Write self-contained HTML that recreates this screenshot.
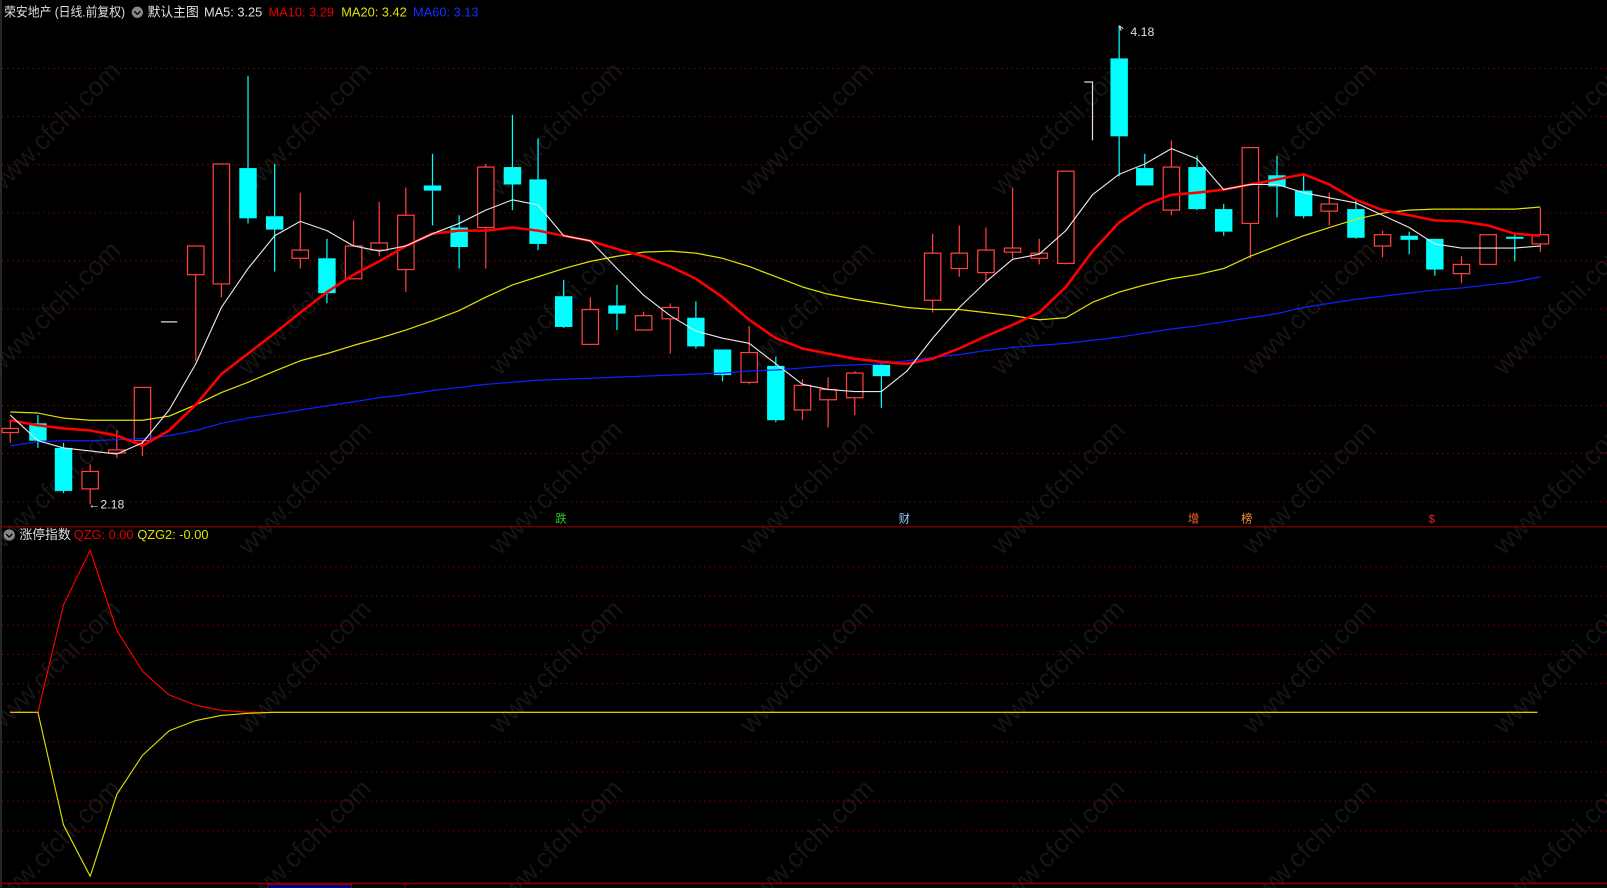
<!DOCTYPE html>
<html><head><meta charset="utf-8"><style>
html,body{margin:0;padding:0;background:#000;overflow:hidden}
svg{display:block}
text{font-family:"Liberation Sans","Noto Sans CJK SC",sans-serif}
</style></head><body>
<svg id="s" width="1607" height="888" viewBox="0 0 1568 866.4" preserveAspectRatio="none" xmlns="http://www.w3.org/2000/svg">
<rect width="1568" height="867" fill="#000"/>
<g id="wm" fill="#151515" font-size="26"></g>
<g id="grid" stroke="#7a0000" stroke-width="1" stroke-dasharray="1.5,3.5"></g>
<line x1="1" y1="0" x2="1" y2="866" stroke="#333" stroke-width="1.5"/>
<line x1="0" y1="514" x2="1568" y2="514" stroke="#8b0000" stroke-width="1.2"/>
<line x1="0" y1="862" x2="1568" y2="862" stroke="#8b0000" stroke-width="1.5"/>
<rect x="261" y="863" width="82" height="4" fill="#000080" stroke="#8b0000"/>
<line x1="395" y1="862" x2="395" y2="867" stroke="#8b0000"/>
<g id="candles"></g>
<g id="lines" fill="none"></g>
<text x="4" y="16" font-size="12.5" fill="#e0e0e0" textLength="118" lengthAdjust="spacingAndGlyphs">荣安地产 (日线.前复权)</text>
<circle cx="134" cy="12" r="5.5" fill="#888"/><path d="M131 11 l3 3 l3 -3" stroke="#000" stroke-width="1.3" fill="none"/>
<text x="144" y="16" font-size="12.5" fill="#e0e0e0">默认主图</text>
<text x="199" y="16" font-size="12.5" fill="#e0e0e0">MA5: 3.25</text>
<text x="262" y="16" font-size="12.5" fill="#e00000">MA10: 3.29</text>
<text x="333" y="16" font-size="12.5" fill="#e0e000">MA20: 3.42</text>
<text x="403" y="16" font-size="12.5" fill="#1030ff">MA60: 3.13</text>
<circle cx="9" cy="522" r="5.5" fill="#888"/><path d="M6 521 l3 3 l3 -3" stroke="#000" stroke-width="1.3" fill="none"/>
<text x="19" y="526" font-size="12.5" fill="#e0e0e0">涨停指数</text>
<text x="72" y="526" font-size="12.5" fill="#e00000">QZG: 0.00</text>
<text x="134" y="526" font-size="12.5" fill="#e0e000">QZG2: -0.00</text>
<text x="86" y="496" font-size="12" fill="#e0e0e0">←2.18</text>
<path d="M1092 25 l4 3 M1092 25 l2 5" stroke="#ddd" fill="none"/>
<text x="1103" y="35" font-size="12" fill="#e0e0e0">4.18</text>
<text x="542" y="510" font-size="11" fill="#20d020">跌</text>
<text x="877" y="510" font-size="11" fill="#a0c8ff">财</text>
<text x="1159" y="510" font-size="11" fill="#ff6030">增</text>
<text x="1211" y="510" font-size="11" fill="#ff9040">榜</text>
<text x="1394" y="510" font-size="11" fill="#ff2020">$</text>
</svg>
<script>
var NS="http://www.w3.org/2000/svg";
function el(p,t,a){var e=document.createElementNS(NS,t);for(var k in a)e.setAttribute(k,a[k]);p.appendChild(e);return e;}
var g=document.getElementById('grid');
[66.8,113.8,160.8,207.7,254.6,301.5,348.3,395.6,442.4,489.5,553,581.5,610,638.5,667,724,753,781.5,810.7].forEach(function(y){el(g,'line',{x1:2,y1:y,x2:1568,y2:y});});
var wm=document.getElementById('wm');
for(var i=0;i<7;i++)for(var j=0;j<5;j++){var x=-20+i*245,y=150+j*175;var t=el(wm,'text',{x:x,y:y,transform:'rotate(-45 '+(x+60)+' '+y+')'});t.textContent='www.cfchi.com';}
var C=[[10,418,422,410,432,'r'],[37,413,430,405,437,'c'],[62,437,479,432,481,'c'],[88,460,477,453,492,'r'],[114,439,442,420,447,'r'],[139,378,430,378,445,'r'],
[191,240,268,240,352,'r'],[216,160,277,160,290,'r'],[242,164,213,74,218,'c'],[268,211,224,160,265,'c'],[293,244,252,188,262,'r'],[319,252,286,233,296,'c'],[345,240,272,215,272,'r'],[370,237,244,197,250,'r'],[396,210,263,183,285,'r'],[422,181,186,150,220,'c'],[448,222,241,210,262,'c'],[474,163,222,160,262,'r'],[500,163,180,112,205,'c'],[525,175,238,135,244,'c'],[550,289,319,273,320,'c'],[576,302,336,290,336,'r'],[602,298,306,278,322,'c'],[628,308,322,304,322,'r'],[654,300,311,296,345,'r'],[679,310,338,294,340,'c'],[705,341,366,341,372,'c'],[731,344,373,318,375,'r'],[757,357,410,348,412,'c'],[783,376,400,370,410,'r'],[808,380,390,368,417,'r'],[834,364,388,362,405,'r'],[860,356,367,352,398,'c'],
[910,247,293,228,305,'r'],[936,247,262,220,270,'r'],[962,244,266,222,275,'r'],[988,242,246,183,252,'r'],[1014,247,252,233,258,'r'],[1040,167,257,167,258,'r'],[1092,57,133,25,172,'c'],[1117,164,181,150,181,'c'],[1143,163,205,137,210,'r'],[1168,163,204,152,205,'c'],[1194,204,226,199,230,'c'],[1220,144,218,144,252,'r'],[1246,171,182,152,212,'c'],[1272,186,211,170,213,'c'],[1297,199,206,188,220,'r'],[1323,204,232,196,233,'c'],[1349,229,240,225,251,'r'],[1375,230,234,226,248,'c'],[1400,233,263,233,269,'c'],[1426,258,267,250,276,'r'],[1452,229,258,229,258,'r'],[1478,231,233,229,255,'c'],[1503,229,238,203,246,'r']];
var cg=document.getElementById('candles');
C.forEach(function(c){var x=c[0],col=c[5]=='r'?'#ff4040':'#00ffff';
el(cg,'line',{x1:x,y1:c[3],x2:x,y2:c[1],stroke:col,'stroke-width':1.2});
el(cg,'line',{x1:x,y1:c[2],x2:x,y2:c[4],stroke:col,'stroke-width':1.2});
var h=Math.max(c[2]-c[1],1.5);
if(c[5]=='r')el(cg,'rect',{x:x-8,y:c[1],width:16,height:h,fill:'#000',stroke:col,'stroke-width':1.2});
else el(cg,'rect',{x:x-8.5,y:c[1],width:17,height:h,fill:col});});
el(cg,'line',{x1:157,y1:314,x2:173,y2:314,stroke:'#ddd','stroke-width':1.2});
el(cg,'path',{d:'M1058 80 H1066 V137',stroke:'#ddd','stroke-width':1.2,fill:'none'});
var X=[10,37,62,88,114,139,165,191,216,242,268,293,319,345,370,396,422,448,474,500,525,550,576,602,628,654,679,705,731,757,783,808,834,860,885,910,936,962,988,1014,1040,1066,1092,1117,1143,1168,1194,1220,1246,1272,1297,1323,1349,1375,1400,1426,1452,1478,1503];
var M5=[405,430,437,440,443,432,400,355,300,262,230,216,225,240,245,240,228,218,205,195,200,230,235,262,288,308,323,330,335,355,375,380,382,382,362,330,300,275,253,248,225,190,170,160,145,155,185,180,180,188,193,198,210,222,238,242,242,242,240];
var M10=[410,415,418,420,425,435,420,395,365,345,325,305,285,268,255,240,228,225,225,222,225,230,235,243,250,260,272,290,312,330,340,345,350,353,355,350,340,328,317,305,280,245,217,200,190,188,185,180,175,170,180,195,205,210,215,216,220,228,230];
var M20=[402,403,408,410,410,410,406,395,383,373,362,352,345,337,330,322,313,303,290,278,270,262,255,250,246,245,247,252,260,270,280,287,292,296,300,302,302,305,308,312,310,295,285,278,272,268,262,250,240,230,222,214,208,205,204,204,204,204,202];
var M60=[435,431,430,430,429,428,425,420,413,408,404,400,396,392,388,385,381,378,375,373,371,370,369,368,367,366,365,364,362,361,359,357,356,355,352,349,346,342,339,337,335,332,329,325,321,318,314,310,306,300,296,292,289,286,283,281,278,275,270];
var lg=document.getElementById('lines');
function pl(arr,col,w,xs){var d=arr.map(function(y,i){return (xs||X)[i]+','+y;}).join(' ');el(lg,'polyline',{points:d,stroke:col,'stroke-width':w,'stroke-linejoin':'round'});}
pl(M60,'#1020ff',1.2);pl(M20,'#e0e000',1.2);pl(M10,'#ff0000',2.5);pl(M5,'#e8e8e8',1.1);
var LX=[10,37,62,88,114,139,165,191,216,242,268,330,1500];
pl([695,695,590,537,615,655,678,688,693,695,695,695,695],'#ff0000',1.1,LX);
pl([695,695,805,855,775,737,713,703,698,696,695,695,695],'#e0e000',1.1,LX);
</script>
</body></html>
